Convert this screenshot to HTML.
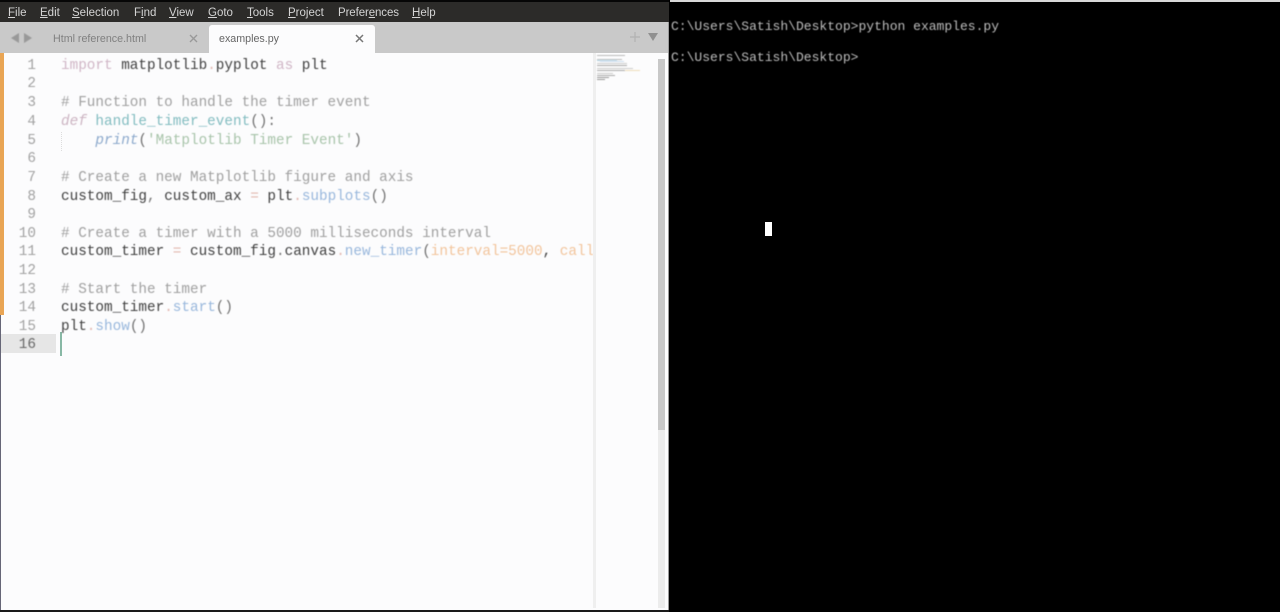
<!DOCTYPE html>
<html><head><meta charset="utf-8"><style>
html,body{margin:0;padding:0;background:#000}
#r{position:relative;width:1280px;height:612px;overflow:hidden;background:#000;font-family:"Liberation Sans",sans-serif}
#r div{position:absolute}
.m{top:6px;font-size:11.5px;line-height:14px;color:#d4d4d4;white-space:pre;filter:blur(.3px)}
.m u{text-underline-offset:1px}
.c{left:61px;height:19px;font:14.33px/19px "Liberation Mono",monospace;color:#404040;white-space:pre;filter:blur(.45px)}
.n{left:0;width:36px;text-align:right;height:19px;font:14.33px/19px "Liberation Mono",monospace;color:#a2a2a2;filter:blur(.45px)}
.k{color:#d0b6c6}.o{color:#e2b8b0}.h{color:#a0a0a0}.i{color:#ccb4c2;font-style:italic}.f{color:#82bcc0}.p{color:#8ca9cc;font-style:italic}.s{color:#a8c4aa}.y{color:#98b7dc}.g{color:#f2c49b}.d{color:#777}.q{color:#707070}
.t{left:671px;font:13.03px/16px "Liberation Mono",monospace;color:#bdbdbd;white-space:pre;filter:blur(.45px)}
.b{background:#bbb;height:1px;filter:blur(.4px)}
</style></head><body><div id="r">
<div style="left:0;top:0;width:669px;height:612px;background:#fcfcfd"></div>
<div style="left:0;top:0;width:669px;height:2px;background:#060606"></div>
<div style="left:0;top:2px;width:669px;height:20px;background:#2c2b29"></div>
<div class="m" style="left:8px"><u>F</u>ile</div>
<div class="m" style="left:40px"><u>E</u>dit</div>
<div class="m" style="left:72px"><u>S</u>election</div>
<div class="m" style="left:134px">F<u>i</u>nd</div>
<div class="m" style="left:169px"><u>V</u>iew</div>
<div class="m" style="left:208px"><u>G</u>oto</div>
<div class="m" style="left:247px"><u>T</u>ools</div>
<div class="m" style="left:288px"><u>P</u>roject</div>
<div class="m" style="left:338px;letter-spacing:-.1px">Prefer<u>e</u>nces</div>
<div class="m" style="left:412px"><u>H</u>elp</div>

<div style="left:0;top:22px;width:669px;height:31px;background:#c9c9c9"></div>
<svg style="position:absolute;left:9px;top:32px;filter:blur(.4px)" width="26" height="12"><path d="M2 6L10 1V11Z" fill="#999"/><path d="M15 1L23 6L15 11Z" fill="#999"/></svg>
<div style="left:53px;top:32px;font-size:10.7px;line-height:14px;color:#808080;white-space:pre;filter:blur(.35px)">Html reference.html</div>
<svg style="position:absolute;left:189px;top:34px;filter:blur(.3px)" width="9" height="9"><path d="M1 1L8 8M8 1L1 8" stroke="#999" stroke-width="1.4"/></svg>
<div style="left:209px;top:25px;width:166px;height:28px;background:#fcfcfd;border-radius:3px 3px 0 0"></div>
<div style="left:219px;top:32px;font-size:10.7px;line-height:14px;color:#666;white-space:pre;filter:blur(.35px)">examples.py</div>
<svg style="position:absolute;left:355px;top:34px;filter:blur(.3px)" width="9" height="9"><path d="M1 1L8 8M8 1L1 8" stroke="#777" stroke-width="1.5"/></svg>
<svg style="position:absolute;left:629px;top:31px;filter:blur(.3px)" width="36" height="12"><path d="M6 1V11M1 6H11" stroke="#b2b2b2" stroke-width="1.2"/><path d="M19 2H29L24 10Z" fill="#909090"/></svg>

<div style="left:0;top:53px;width:4px;height:262px;background:#e9a554"></div>
<div style="left:0;top:315px;width:1px;height:295px;background:#667"></div>
<div style="left:1px;top:334px;width:55px;height:19px;background:#e6e6e6"></div>
<div style="left:61px;top:132px;width:1px;height:19px;border-left:1px dotted #ddd"></div>
<div style="left:60px;top:332px;width:2px;height:24px;background:#88b8a5"></div>

<div class="n" style="top:57px">1</div><div class="n" style="top:75px">2</div><div class="n" style="top:94px">3</div><div class="n" style="top:113px">4</div><div class="n" style="top:132px">5</div><div class="n" style="top:150px">6</div><div class="n" style="top:169px">7</div><div class="n" style="top:188px">8</div><div class="n" style="top:206px">9</div><div class="n" style="top:225px">10</div><div class="n" style="top:243px">11</div><div class="n" style="top:262px">12</div><div class="n" style="top:281px">13</div><div class="n" style="top:299px">14</div><div class="n" style="top:318px">15</div><div class="n" style="top:336px;color:#666">16</div>

<div class="c" style="top:57px"><span class="k">import</span> matplotlib<span class="o">.</span>pyplot <span class="k">as</span> plt</div>
<div class="c h" style="top:94px"># Function to handle the timer event</div>
<div class="c" style="top:113px"><span class="i">def</span> <span class="f">handle_timer_event</span><span class="q">():</span></div>
<div class="c" style="top:132px">    <span class="p">print</span><span class="q">(</span><span class="s">'Matplotlib Timer Event'</span><span class="q">)</span></div>
<div class="c h" style="top:169px"># Create a new Matplotlib figure and axis</div>
<div class="c" style="top:188px">custom_fig<span class="d">,</span> custom_ax <span class="o">=</span> plt<span class="o">.</span><span class="y">subplots</span><span class="q">()</span></div>
<div class="c h" style="top:225px"># Create a timer with a 5000 milliseconds interval</div>
<div class="c" style="top:243px;width:532px;overflow:hidden">custom_timer <span class="o">=</span> custom_fig<span class="d">.</span>canvas<span class="o">.</span><span class="y">new_timer</span><span class="q">(</span><span class="g">interval=5000</span>, <span class="g">call</span></div>
<div class="c h" style="top:281px"># Start the timer</div>
<div class="c" style="top:299px">custom_timer<span class="o">.</span><span class="y">start</span><span class="q">()</span></div>
<div class="c" style="top:318px">plt<span class="o">.</span><span class="y">show</span><span class="q">()</span></div>

<div style="left:593px;top:53px;width:3px;height:555px;background:#efefef"></div>
<div class="b" style="left:597px;top:55px;width:28px"></div>
<div class="b" style="left:597px;top:59px;width:25px"></div>
<div class="b" style="left:597px;top:60px;width:20px;background:#acd"></div>
<div class="b" style="left:600px;top:61px;width:24px;background:#cde"></div>
<div class="b" style="left:597px;top:63px;width:30px;background:#ccc"></div>
<div class="b" style="left:597px;top:65px;width:30px;background:#aaa"></div>
<div class="b" style="left:597px;top:68px;width:36px;background:#ccc"></div>
<div class="b" style="left:597px;top:70px;width:28px;background:#aaa"></div>
<div class="b" style="left:625px;top:70px;width:15px;background:#edb"></div>
<div class="b" style="left:597px;top:73px;width:16px;background:#ccc"></div>
<div class="b" style="left:597px;top:75px;width:18px;background:#aaa"></div>
<div class="b" style="left:597px;top:77px;width:12px;background:#999"></div>
<div class="b" style="left:597px;top:79px;width:8px;background:#999"></div>
<div style="left:658px;top:59px;width:7px;height:371px;background:#c8c8c8"></div>
<div style="left:658px;top:430px;width:7px;height:178px;background:#ececec"></div>
<div style="left:668px;top:22px;width:1px;height:590px;background:#999"></div>
<div style="left:0;top:610px;width:669px;height:2px;background:#1a1a1a"></div>

<div style="left:670px;top:0;width:610px;height:2px;background:#d8d8d8"></div>
<div class="t" style="top:19px">C:\Users\Satish\Desktop&gt;python examples.py</div>
<div class="t" style="top:50px">C:\Users\Satish\Desktop&gt;</div>
<div style="left:765px;top:222px;width:7px;height:14px;background:#fff"></div>
</div></body></html>
